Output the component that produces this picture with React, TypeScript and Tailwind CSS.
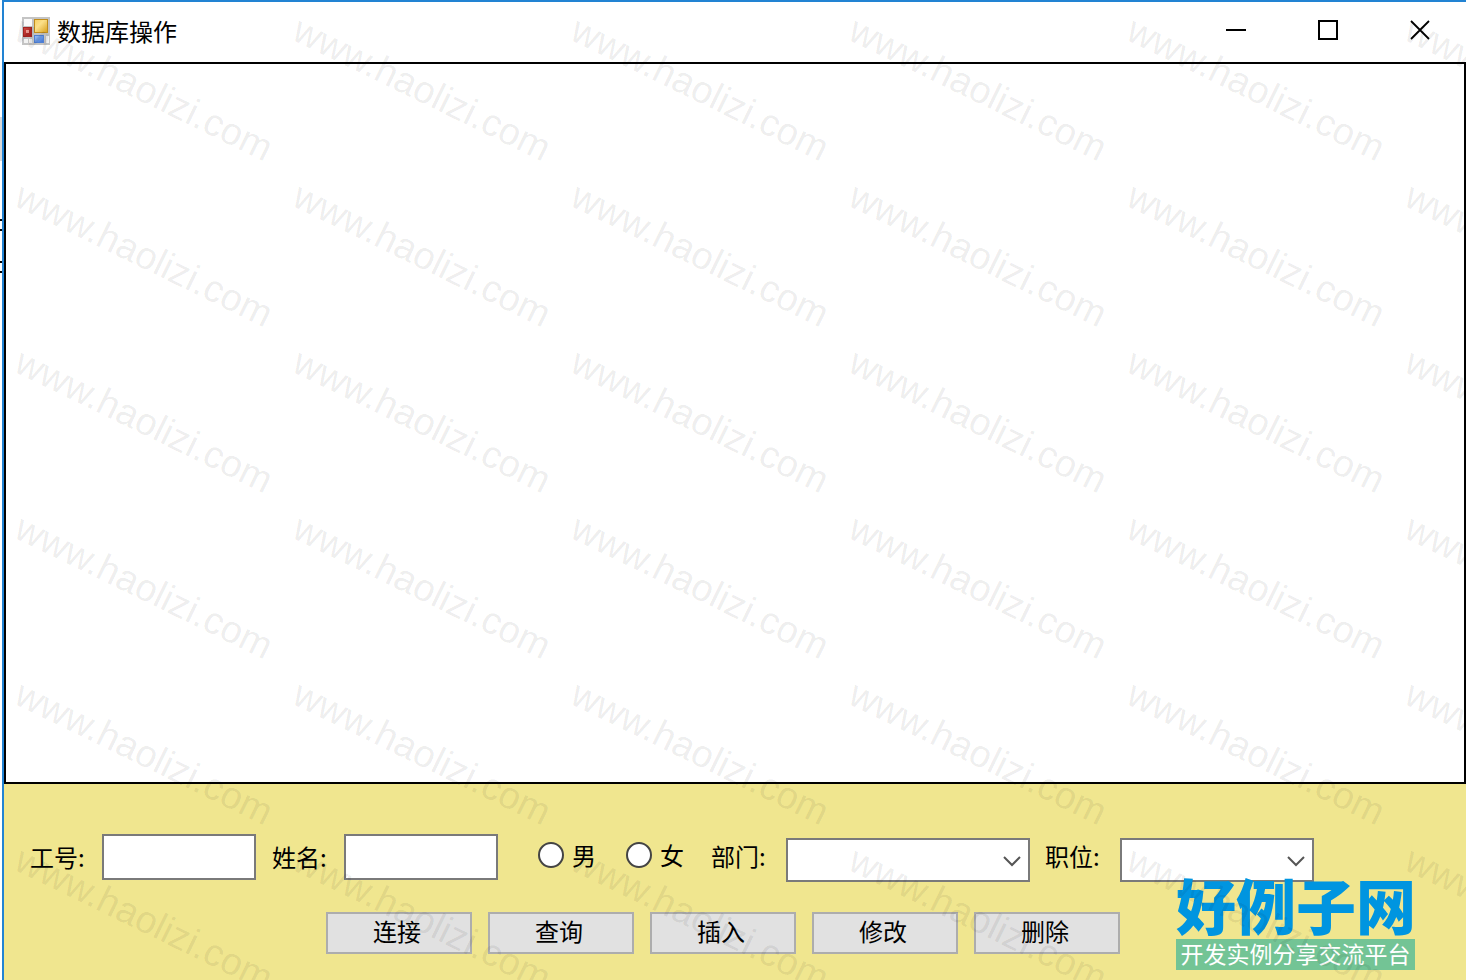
import React from 'react';

interface SelectFieldProps {
  id: string;
  label: string;
  className: string;
}

const actions = ['连接', '查询', '插入', '修改', '删除'];
const genders = ['男', '女'];
const watermarks = Array.from({ length: 36 }, (_, index) => index);

function AppIcon() {
  return (
    <svg className="w-7 h-7" viewBox="0 0 28 28" aria-hidden="true">
      <defs>
        <linearGradient id="gold" x1="0" y1="0" x2="1" y2="1">
          <stop offset="0" stopColor="#f6cf62" />
          <stop offset="0.4" stopColor="#fbe08a" />
          <stop offset="1" stopColor="#d8a01c" />
        </linearGradient>
        <linearGradient id="red" x1="0" y1="0" x2="1" y2="1">
          <stop offset="0" stopColor="#cf4a44" />
          <stop offset="1" stopColor="#9c1614" />
        </linearGradient>
        <linearGradient id="blue" x1="0" y1="0" x2="1" y2="1">
          <stop offset="0" stopColor="#9cc4fa" />
          <stop offset="1" stopColor="#3a6fd0" />
        </linearGradient>
      </defs>
      <rect x="0" y="0" width="28" height="28" fill="#c4c4c4" />
      <rect x="2" y="2" width="8" height="7" fill="#fafafa" />
      <rect x="2" y="22" width="4" height="4" fill="#f2f2f2" />
      <rect x="7" y="22" width="3" height="4" fill="#f2f2f2" />
      <rect x="24" y="19" width="3" height="7" fill="#f2f2f2" />
      <rect x="12.5" y="2.5" width="13" height="13" fill="url(#gold)" stroke="#c08c1c" />
      <rect x="1.5" y="10.5" width="8" height="9" fill="url(#red)" stroke="#a32420" />
      <rect x="4" y="13" width="3" height="3" fill="#ee9a92" />
      <rect x="12.5" y="18.5" width="9" height="7" fill="url(#blue)" stroke="#4f80d4" />
    </svg>
  );
}

function TitleBar() {
  return (
    <header className="flex items-start justify-between h-[60px] bg-white">
      <div className="flex items-center gap-[7px] h-[58px] pl-[18px]">
        <AppIcon />
        <h1 className="text-2xl text-black">数据库操作</h1>
      </div>
      <div className="flex">
        <button aria-label="最小化" className="flex items-center justify-center w-[92px] h-14">
          <svg className="w-5 h-5" viewBox="0 0 20 20">
            <path d="M0 10h20" stroke="#000" strokeWidth="2" />
          </svg>
        </button>
        <button aria-label="最大化" className="flex items-center justify-center w-[92px] h-14">
          <svg className="w-5 h-5" viewBox="0 0 20 20">
            <rect x="1" y="1" width="18" height="18" fill="none" stroke="#000" strokeWidth="2" />
          </svg>
        </button>
        <button aria-label="关闭" className="flex items-center justify-center w-[92px] h-14">
          <svg className="w-5 h-5" viewBox="0 0 20 20">
            <path d="M1 1l18 18M19 1L1 19" stroke="#000" strokeWidth="1.8" />
          </svg>
        </button>
      </div>
    </header>
  );
}

function TextField({ id, label }: { id: string; label: string }) {
  return (
    <div className="flex items-center">
      <label htmlFor={id} className="w-[72px]">{label}</label>
      <input id={id} type="text" className="w-[154px] h-[46px] px-2 bg-white border-2 border-[#7a7a7a]" />
    </div>
  );
}

function SelectField({ id, label, className }: SelectFieldProps) {
  return (
    <div className="flex items-center">
      <label htmlFor={id} className="w-[75px] pb-2">{label}</label>
      <div className="relative">
        <select id={id} className={`h-11 px-2 bg-white border-2 border-[#7a7a7a] appearance-none ${className}`} />
        <svg
          className="absolute right-[9px] top-[18px] w-[18px] h-3 pointer-events-none"
          viewBox="0 0 18 12"
          fill="none"
          stroke="#555"
          strokeWidth="2"
        >
          <path d="M1 1l8 8 8-8" />
        </svg>
      </div>
    </div>
  );
}

function EmployeeForm() {
  return (
    <form className="bg-[#f0e68f] pt-[50px] pb-[26px] text-2xl text-black" onSubmit={(e) => e.preventDefault()}>
      <div className="flex items-start h-12 pl-[26px]">
        <div className="flex gap-4">
          <TextField id="number" label="工号:" />
          <TextField id="name" label="姓名:" />
        </div>
        <div className="flex gap-[30px] h-[42px] ml-10">
          {genders.map((gender) => (
            <label key={gender} className="flex items-center gap-2">
              <input
                type="radio"
                name="gender"
                value={gender}
                className="appearance-none w-[26px] h-[26px] rounded-full bg-white border-2 border-[#444] checked:bg-[#333]"
              />
              {gender}
            </label>
          ))}
        </div>
        <div className="flex gap-[15px] self-end ml-[27px]">
          <SelectField id="department" label="部门:" className="w-[244px]" />
          <SelectField id="position" label="职位:" className="w-[194px]" />
        </div>
      </div>
      <div className="flex gap-4 mt-[30px] pl-[322px]">
        {actions.map((action) => (
          <button
            key={action}
            type="button"
            className="flex items-center justify-center w-[146px] h-[42px] pr-1 pb-1 bg-[#e1e1e1] border-2 border-[#adadad]"
          >
            {action}
          </button>
        ))}
      </div>
    </form>
  );
}

function SiteBadge() {
  return (
    <div className="absolute right-[51px] bottom-[10px] w-[239px]">
      <p className="mb-1 text-[60px] leading-[63px] font-black text-[#0095e0] whitespace-nowrap">好例子网</p>
      <p className="h-[31px] text-center text-[23px] leading-[28px] text-white bg-[#73c495] whitespace-nowrap">
        开发实例分享交流平台
      </p>
    </div>
  );
}

function Watermark() {
  return (
    <div
      aria-hidden="true"
      className="absolute inset-0 grid grid-cols-[repeat(6,278px)] auto-rows-[166px] pl-[18px] pt-[5px] overflow-hidden pointer-events-none"
    >
      {watermarks.map((index) => (
        <span
          key={index}
          className="justify-self-start self-start origin-left rotate-26 font-['Liberation_Sans',sans-serif] text-[38px] leading-[44px] text-black/8"
        >
          www.haolizi.com
        </span>
      ))}
    </div>
  );
}

export default function App() {
  return (
    <div className="relative flex min-h-screen overflow-hidden bg-white font-['Noto_Sans_CJK_SC',sans-serif]">
      {/* Sliver of the window behind */}
      <div className="w-[2px] shrink-0 overflow-hidden">
        <div className="mt-[117px] h-11 bg-[#d9d9d9]" />
        <div className="mt-[58px] h-3 border-y-2 border-black" />
        <div className="mt-[30px] h-3 border-y-2 border-black" />
      </div>
      <div className="flex flex-1 flex-col border-t-2 border-l-2 border-[#2283d3]">
        <TitleBar />
        <main className="flex-1 bg-white border-2 border-black" />
        <EmployeeForm />
      </div>
      <SiteBadge />
      <Watermark />
    </div>
  );
}
